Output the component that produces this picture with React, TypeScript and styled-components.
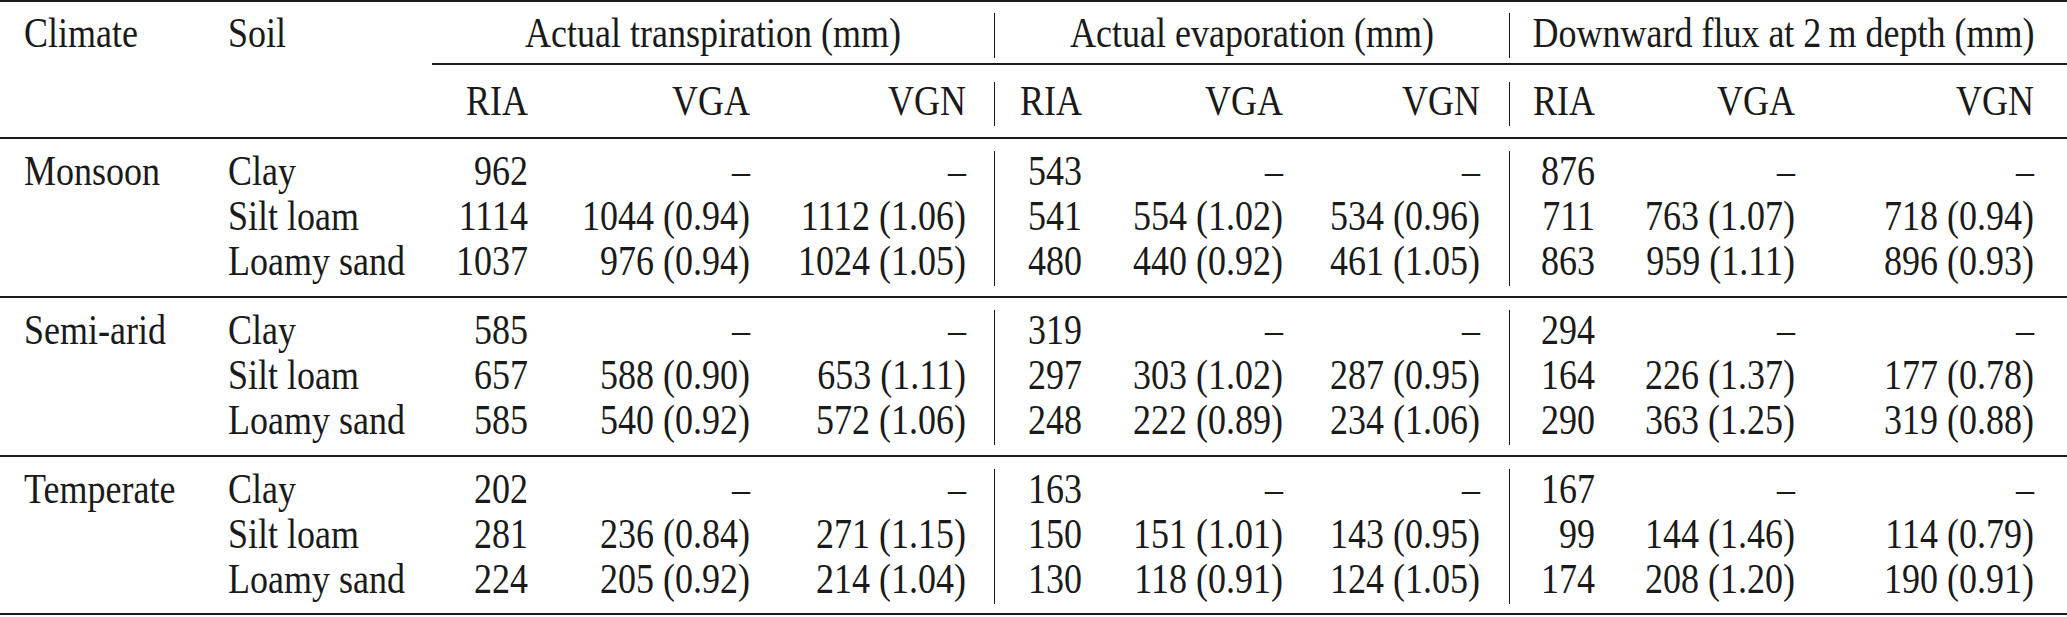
import styled, { createGlobalStyle } from "styled-components";

const GlobalStyle = createGlobalStyle`
  html, body {
    margin: 0;
    padding: 0;
    background: #ffffff;
  }
`;

// column widths and paddings, measured off the source table
const COLUMNS = [
  { w: 228, pl: 24, pr: 0, left: true },
  { w: 204, pl: 0, pr: 0, left: true },
  { w: 108, pl: 0, pr: 12 },
  { w: 222, pl: 0, pr: 12 },
  { w: 232, pl: 0, pr: 28 },
  { w: 100, pl: 0, pr: 12, rule: true },
  { w: 201, pl: 0, pr: 12 },
  { w: 214, pl: 0, pr: 29 },
  { w: 98, pl: 0, pr: 12, rule: true },
  { w: 200, pl: 0, pr: 12 },
  { w: 260, pl: 0, pr: 33 },
];

const TEMPLATE = COLUMNS.map((c) => `${c.w}px`).join(" ");
const INK = "#1a1a1a";

const Table = styled.div`
  width: 2067px;
  font-family: "Liberation Serif", "Times New Roman", Times, serif;
  font-size: 36px;
  color: ${INK};
  border-top: 2px solid ${INK};
  border-bottom: 2px solid ${INK};
`;

const Section = styled.div<{ $top: number; $bottom: number; $ruled?: boolean }>`
  padding-top: ${(p) => p.$top}px;
  padding-bottom: ${(p) => p.$bottom}px;
  border-bottom: ${(p) => (p.$ruled ? `2px solid ${INK}` : "none")};
`;

const CmidRule = styled.div`
  margin-left: 432px;
  border-top: 2px solid ${INK};
`;

const Grid = styled.div<{ $row: number }>`
  display: grid;
  grid-template-columns: ${TEMPLATE};
  grid-auto-rows: ${(p) => p.$row}px;
`;

const Cell = styled.div<{ $col: number; $span?: number; $center?: boolean; $padRight?: number }>`
  box-sizing: border-box;
  grid-column: ${(p) => p.$col} / span ${(p) => p.$span ?? 1};
  display: flex;
  align-items: center;
  white-space: nowrap;
  line-height: 1;
  padding-bottom: 6px;
  justify-content: ${(p) =>
    p.$center ? "center" : COLUMNS[p.$col - 1].left ? "flex-start" : "flex-end"};
  padding-left: ${(p) => (p.$center ? 0 : COLUMNS[p.$col - 1].pl)}px;
  padding-right: ${(p) => (p.$center ? p.$padRight ?? 0 : COLUMNS[p.$col - 1].pr)}px;
  border-left: ${(p) => (COLUMNS[p.$col - 1].rule ? `1.5px solid ${INK}` : "none")};
`;

// the source glyphs are drawn a little taller than plain Times
const Text = styled.span`
  display: inline-block;
  transform: scaleY(1.2);
  transform-origin: 50% 50%;
`;

type Row = { soil: string; values: string[] };
type Group = { climate: string; rows: Row[] };

const DASH = "\u2013";

const GROUPS: Group[] = [
  {
    climate: "Monsoon",
    rows: [
      { soil: "Clay", values: ["962", DASH, DASH, "543", DASH, DASH, "876", DASH, DASH] },
      { soil: "Silt loam", values: ["1114", "1044 (0.94)", "1112 (1.06)", "541", "554 (1.02)", "534 (0.96)", "711", "763 (1.07)", "718 (0.94)"] },
      { soil: "Loamy sand", values: ["1037", "976 (0.94)", "1024 (1.05)", "480", "440 (0.92)", "461 (1.05)", "863", "959 (1.11)", "896 (0.93)"] },
    ],
  },
  {
    climate: "Semi-arid",
    rows: [
      { soil: "Clay", values: ["585", DASH, DASH, "319", DASH, DASH, "294", DASH, DASH] },
      { soil: "Silt loam", values: ["657", "588 (0.90)", "653 (1.11)", "297", "303 (1.02)", "287 (0.95)", "164", "226 (1.37)", "177 (0.78)"] },
      { soil: "Loamy sand", values: ["585", "540 (0.92)", "572 (1.06)", "248", "222 (0.89)", "234 (1.06)", "290", "363 (1.25)", "319 (0.88)"] },
    ],
  },
  {
    climate: "Temperate",
    rows: [
      { soil: "Clay", values: ["202", DASH, DASH, "163", DASH, DASH, "167", DASH, DASH] },
      { soil: "Silt loam", values: ["281", "236 (0.84)", "271 (1.15)", "150", "151 (1.01)", "143 (0.95)", "99", "144 (1.46)", "114 (0.79)"] },
      { soil: "Loamy sand", values: ["224", "205 (0.92)", "214 (1.04)", "130", "118 (0.91)", "124 (1.05)", "174", "208 (1.20)", "190 (0.91)"] },
    ],
  },
];

const MODELS = ["RIA", "VGA", "VGN"];

export default function App() {
  return (
    <>
      <GlobalStyle />
      <Table>
        <Section $top={11} $bottom={5}>
          <Grid $row={45}>
            <Cell $col={1}>
              <Text>Climate</Text>
            </Cell>
            <Cell $col={2}>
              <Text>Soil</Text>
            </Cell>
            <Cell $col={3} $span={3} $center>
              <Text>Actual transpiration (mm)</Text>
            </Cell>
            <Cell $col={6} $span={3} $center>
              <Text>Actual evaporation (mm)</Text>
            </Cell>
            <Cell $col={9} $span={3} $center $padRight={10}>
              <Text>Downward flux at 2&#8201;m depth (mm)</Text>
            </Cell>
          </Grid>
        </Section>
        <CmidRule />
        <Section $top={17} $bottom={11} $ruled>
          <Grid $row={44}>
            <Cell $col={1} />
            <Cell $col={2} />
            {[0, 1, 2].flatMap((g) =>
              MODELS.map((m, i) => (
                <Cell key={`${g}-${m}`} $col={3 + g * 3 + i}>
                  <Text>{m}</Text>
                </Cell>
              ))
            )}
          </Grid>
        </Section>
        {GROUPS.map((group, gi) => {
          const last = gi === GROUPS.length - 1;
          return (
            <Section key={group.climate} $top={12} $bottom={last ? 9 : 10} $ruled={!last}>
              <Grid $row={45}>
                {group.rows.map((row, ri) => [
                  <Cell key={`c-${ri}`} $col={1}>
                    {ri === 0 && <Text>{group.climate}</Text>}
                  </Cell>,
                  <Cell key={`s-${ri}`} $col={2}>
                    <Text>{row.soil}</Text>
                  </Cell>,
                  ...row.values.map((v, vi) => (
                    <Cell key={`v-${ri}-${vi}`} $col={3 + vi}>
                      <Text>{v}</Text>
                    </Cell>
                  )),
                ])}
              </Grid>
            </Section>
          );
        })}
      </Table>
    </>
  );
}
